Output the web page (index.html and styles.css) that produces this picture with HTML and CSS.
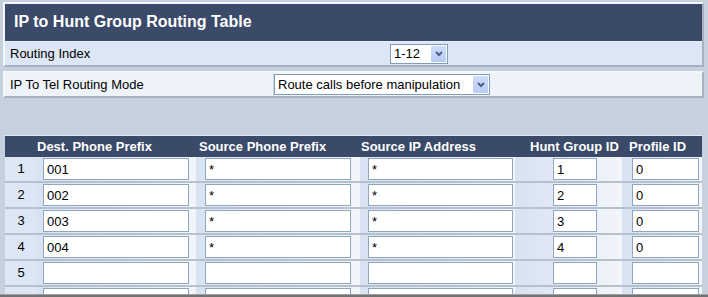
FILE: index.html
```html
<!DOCTYPE html>
<html lang="en">
<head>
    <meta charset="UTF-8">
    <title>IP to Hunt Group Routing Table</title>
    <link rel="stylesheet" href="styles.css">
</head>
<body>
    <div class="panel">
        <div class="title">IP to Hunt Group Routing Table</div>
        <div class="index-row">
            <span class="label">Routing Index</span>
            <div class="combo combo-index">
                <span class="combo-value">1-12</span>
                <span class="combo-btn"><svg width="8" height="6" viewBox="0 0 8 6"><polyline points="1,1 4,4 7,1" fill="none" stroke="#4a5f8a" stroke-width="2"/></svg></span>
            </div>
        </div>
    </div>

    <div class="panel mode-panel">
        <div class="mode-label">IP To Tel Routing Mode</div>
        <div class="mode-cell">
            <div class="combo combo-mode">
                <span class="combo-value">Route calls before manipulation</span>
                <span class="combo-btn"><svg width="8" height="6" viewBox="0 0 8 6"><polyline points="1,1 4,4 7,1" fill="none" stroke="#4a5f8a" stroke-width="2"/></svg></span>
            </div>
        </div>
    </div>

    <table class="routing">
        <colgroup>
            <col class="col-idx">
            <col class="col-dest">
            <col class="col-src">
            <col class="col-ip">
            <col class="col-hunt">
            <col class="col-profile">
        </colgroup>
        <thead>
            <tr>
                <th></th>
                <th class="h-dest">Dest. Phone Prefix</th>
                <th class="h-src">Source Phone Prefix</th>
                <th class="h-ip">Source IP Address</th>
                <th class="h-hunt">Hunt Group ID</th>
                <th class="h-profile">Profile ID</th>
            </tr>
        </thead>
        <tbody>
            <tr>
                <td class="idx">1</td>
                <td class="c-dest"><input type="text" value="001"></td>
                <td class="c-src"><input type="text" value="*"></td>
                <td class="c-ip"><input type="text" value="*"></td>
                <td class="c-hunt"><input type="text" value="1"></td>
                <td class="c-profile"><input type="text" value="0"></td>
            </tr>
            <tr>
                <td class="idx">2</td>
                <td class="c-dest"><input type="text" value="002"></td>
                <td class="c-src"><input type="text" value="*"></td>
                <td class="c-ip"><input type="text" value="*"></td>
                <td class="c-hunt"><input type="text" value="2"></td>
                <td class="c-profile"><input type="text" value="0"></td>
            </tr>
            <tr>
                <td class="idx">3</td>
                <td class="c-dest"><input type="text" value="003"></td>
                <td class="c-src"><input type="text" value="*"></td>
                <td class="c-ip"><input type="text" value="*"></td>
                <td class="c-hunt"><input type="text" value="3"></td>
                <td class="c-profile"><input type="text" value="0"></td>
            </tr>
            <tr>
                <td class="idx">4</td>
                <td class="c-dest"><input type="text" value="004"></td>
                <td class="c-src"><input type="text" value="*"></td>
                <td class="c-ip"><input type="text" value="*"></td>
                <td class="c-hunt"><input type="text" value="4"></td>
                <td class="c-profile"><input type="text" value="0"></td>
            </tr>
            <tr>
                <td class="idx">5</td>
                <td class="c-dest"><input type="text" value=""></td>
                <td class="c-src"><input type="text" value=""></td>
                <td class="c-ip"><input type="text" value=""></td>
                <td class="c-hunt"><input type="text" value=""></td>
                <td class="c-profile"><input type="text" value=""></td>
            </tr>
            <tr>
                <td class="idx">6</td>
                <td class="c-dest"><input type="text" value=""></td>
                <td class="c-src"><input type="text" value=""></td>
                <td class="c-ip"><input type="text" value=""></td>
                <td class="c-hunt"><input type="text" value=""></td>
                <td class="c-profile"><input type="text" value=""></td>
            </tr>
        </tbody>
    </table>

    <div class="frame-bottom"></div>
</body>
</html>
```

FILE: styles.css
```css
* { margin: 0; padding: 0; box-sizing: border-box; }
body { font-family: "Liberation Sans", Arial, sans-serif; font-size: 13px; color: #000; background: #c6d1de; padding-top: 2px; height: 297px; overflow: hidden; }

.panel { margin-left: 3px; width: 701px; border: 2px solid; border-color: #f3f6fa #a7b1bf #a7b1bf #f3f6fa; }
.title { height: 38px; background: #3a4a68; color: #fff; font-weight: bold; font-size: 16px; line-height: 36px; padding-left: 9px; border-bottom: 1px solid #e9eef6; }
.index-row { display: grid; grid-template-columns: 385px auto; align-items: center; height: 23px; background: #dce6f4; }
.index-row .label { padding-left: 5px; }

.combo { display: flex; align-items: center; background: #fff; border: 1px solid #7f9db9; }
.combo-value { flex: 1; padding-left: 3px; white-space: nowrap; }
.combo-btn { display: flex; align-items: center; justify-content: center; width: 15px; margin: 1px; align-self: stretch; background: linear-gradient(#cfdcfb, #b9cbf3); border-radius: 1px; }
.combo-index { width: 58px; height: 20px; }
.combo-mode { width: 216px; height: 21px; }

.mode-panel { margin-top: 4px; display: flex; height: 27px; background: #eef3fa; }
.mode-label { width: 269px; padding-left: 5px; line-height: 23px; border-right: 1px solid #cdd6e2; }
.mode-cell { padding-top: 1px; }

.routing { margin-top: 37px; margin-left: 5px; width: 697px; table-layout: fixed; border-collapse: separate; border-spacing: 0; border-top: 1px solid #e3e9f1; }
.col-idx { width: 32px; }
.col-dest { width: 159px; }
.col-src { width: 164px; }
.col-ip { width: 155px; }
.col-hunt { width: 107px; }
.col-profile { width: 80px; }

.routing th { height: 21px; background: #3a4a68; color: #fff; font-weight: bold; font-size: 13px; text-align: left; white-space: nowrap; overflow: visible; padding: 0; }
.h-src { padding-left: 3px !important; }
.h-ip { padding-left: 1px !important; }
.h-hunt { padding-left: 15px !important; }
.h-profile { padding-left: 7px !important; }

.routing td { height: 26px; padding: 1px 0 0; vertical-align: top; border-bottom: 2px solid #b7c1ce; background: linear-gradient(to right, #d8e2f2, #f2f5fa); }
.routing td.idx { background: #dce6f4; text-align: center; line-height: 22px; }
.routing input { display: block; height: 22px; border: 1px solid #8fa6c1; background: #fff; font-family: "Liberation Sans", Arial, sans-serif; font-size: 13px; padding-left: 3px; outline: none; }
.c-dest { padding-left: 6px !important; }
.c-dest input { width: 146px; }
.c-src { padding-left: 9px !important; }
.c-src input { width: 146px; }
.c-ip { padding-left: 8px !important; }
.c-ip input { width: 145px; }
.c-hunt { padding-left: 38px !important; }
.c-hunt input { width: 44px; }
.c-profile { padding-left: 10px !important; }
.c-profile input { width: 67px; }

.frame-bottom { position: fixed; left: 0; right: 0; bottom: 0; height: 3px; background: #737373; border-top: 1px solid #a0a0a0; }
```
